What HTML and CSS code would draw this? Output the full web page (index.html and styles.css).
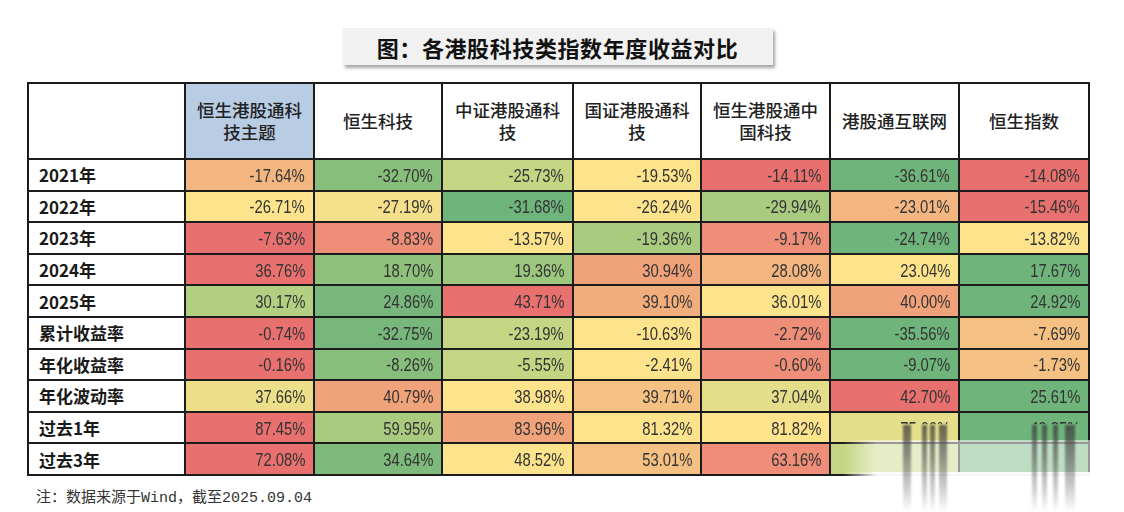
FILE: index.html
```html
<!DOCTYPE html>
<html lang="zh-CN">
<head>
<meta charset="utf-8">
<title>各港股科技类指数年度收益对比</title>
<link rel="stylesheet" href="styles.css">
</head>
<body>
<div class="page">
  <div class="title-row"><div class="title">图：各港股科技类指数年度收益对比</div></div>
  <table class="grid">
    <colgroup>
      <col class="c0"><col class="c1"><col class="c2"><col class="c3"><col class="c4"><col class="c5"><col class="c6"><col class="c7">
    </colgroup>
    <thead>
      <tr>
        <th class="corner"></th>
        <th class="hl">恒生港股通科<br>技主题</th>
        <th>恒生科技</th>
        <th>中证港股通科<br>技</th>
        <th>国证港股通科<br>技</th>
        <th>恒生港股通中<br>国科技</th>
        <th>港股通互联网</th>
        <th>恒生指数</th>
      </tr>
    </thead>
    <tbody>
      <tr><td class="lab">2021年</td><td class="o"><span>-17.64%</span></td><td class="g2"><span>-32.70%</span></td><td class="lg"><span>-25.73%</span></td><td class="y"><span>-19.53%</span></td><td class="r"><span>-14.11%</span></td><td class="g3"><span>-36.61%</span></td><td class="r"><span>-14.08%</span></td></tr>
      <tr><td class="lab">2022年</td><td class="y"><span>-26.71%</span></td><td class="y2"><span>-27.19%</span></td><td class="g3"><span>-31.68%</span></td><td class="y"><span>-26.24%</span></td><td class="g1"><span>-29.94%</span></td><td class="o"><span>-23.01%</span></td><td class="r"><span>-15.46%</span></td></tr>
      <tr><td class="lab">2023年</td><td class="r"><span>-7.63%</span></td><td class="s"><span>-8.83%</span></td><td class="y"><span>-13.57%</span></td><td class="g1"><span>-19.36%</span></td><td class="s"><span>-9.17%</span></td><td class="g3"><span>-24.74%</span></td><td class="y"><span>-13.82%</span></td></tr>
      <tr><td class="lab">2024年</td><td class="r"><span>36.76%</span></td><td class="g2b"><span>18.70%</span></td><td class="g1b"><span>19.36%</span></td><td class="s2"><span>30.94%</span></td><td class="o"><span>28.08%</span></td><td class="y"><span>23.04%</span></td><td class="g3"><span>17.67%</span></td></tr>
      <tr><td class="lab">2025年</td><td class="lg2"><span>30.17%</span></td><td class="g3b"><span>24.86%</span></td><td class="r"><span>43.71%</span></td><td class="o3"><span>39.10%</span></td><td class="y"><span>36.01%</span></td><td class="s2"><span>40.00%</span></td><td class="g3"><span>24.92%</span></td></tr>
      <tr><td class="lab">累计收益率</td><td class="r"><span>-0.74%</span></td><td class="g3b"><span>-32.75%</span></td><td class="lg"><span>-23.19%</span></td><td class="y"><span>-10.63%</span></td><td class="s"><span>-2.72%</span></td><td class="g3"><span>-35.56%</span></td><td class="o2"><span>-7.69%</span></td></tr>
      <tr><td class="lab">年化收益率</td><td class="r"><span>-0.16%</span></td><td class="g2"><span>-8.26%</span></td><td class="lg"><span>-5.55%</span></td><td class="y"><span>-2.41%</span></td><td class="s"><span>-0.60%</span></td><td class="g3"><span>-9.07%</span></td><td class="o2"><span>-1.73%</span></td></tr>
      <tr><td class="lab">年化波动率</td><td class="k"><span>37.66%</span></td><td class="s2"><span>40.79%</span></td><td class="y"><span>38.98%</span></td><td class="o2"><span>39.71%</span></td><td class="k2"><span>37.04%</span></td><td class="r"><span>42.70%</span></td><td class="g3"><span>25.61%</span></td></tr>
      <tr><td class="lab">过去1年</td><td class="r"><span>87.45%</span></td><td class="g1"><span>59.95%</span></td><td class="s2"><span>83.96%</span></td><td class="y"><span>81.32%</span></td><td class="y"><span>81.82%</span></td><td class="k2"><span class="cut">75.00%</span></td><td class="g3"><span class="cut">49.85%</span></td></tr>
      <tr><td class="lab">过去3年</td><td class="r"><span>72.08%</span></td><td class="g2c"><span>34.64%</span></td><td class="y"><span>48.52%</span></td><td class="o2"><span>53.01%</span></td><td class="s"><span>63.16%</span></td><td class="lg3"></td><td class="g3"></td></tr>
    </tbody>
  </table>
  <p class="note">注：数据来源于<span class="mono">Wind</span>，截至<span class="mono">2025.09.04</span></p>
</div>
<div class="wm">
  <div class="wm-band"></div>
  <div class="wm-low"></div>
  <div class="bar b1"></div><div class="bar b2"></div><div class="bar b3"></div><div class="bar b4"></div>
  <div class="bar b5"></div><div class="bar b6"></div><div class="bar b7"></div><div class="bar b8"></div>
</div>
</body>
</html>
```
FILE: styles.css
```css
html, body { margin: 0; padding: 0; background: #ffffff; }
body { width: 1124px; height: 512px; overflow: hidden; position: relative; font-family: "Noto Sans CJK SC", "Noto Sans", sans-serif; color: #222; }

.page { margin-left: 27px; width: 1061px; padding-top: 28px; }

.title-row { display: flex; justify-content: center; }
.title {
  width: 430px; height: 37px; box-sizing: border-box;
  display: flex; align-items: center; justify-content: center;
  background: #f1f1f1;
  box-shadow: 2px 3px 3px rgba(0,0,0,0.35);
  font-size: 22px; font-weight: 700; color: #111; letter-spacing: 0.6px;
}

.grid {
  margin-top: 17px;
  width: 1061px;
  border-collapse: collapse;
  table-layout: fixed;
}
.c0 { width: 157px; } .c1 { width: 129px; } .c2 { width: 128px; } .c3 { width: 131px; }
.c4 { width: 128px; } .c5 { width: 129px; } .c6 { width: 129px; } .c7 { width: 130px; }

.grid th, .grid td { border: 2px solid #1c1c1c; padding: 0; }
.grid thead tr { height: 76px; }
.grid th {
  font-size: 17.5px; font-weight: 500; line-height: 22px; color: #222;
  text-align: center; vertical-align: middle; background: #fff;
}
.grid th.hl { background: #b8cce4; }
.grid tbody tr { height: 31.6px; }
.grid td { text-align: right; padding-right: 8px; vertical-align: middle; }
.grid td span {
  display: inline-block;
  font-family: "Liberation Sans", Arial, sans-serif;
  font-size: 19px; line-height: 20px; color: #333;
  transform: scaleX(0.78); transform-origin: right center;
}
.grid td span.cut { clip-path: inset(0 0 72% 0); }
.grid td.lab {
  text-align: left; padding: 0 0 0 10px; background: #fff;
  font-size: 17px; font-weight: 700; color: #1a1a1a;
}

.r { background: #e8716f; }
.s { background: #ee8d78; }
.s2 { background: #f0a37a; }
.o { background: #f3b680; }
.o2 { background: #f5c183; }
.o3 { background: #f2ad7c; }
.y { background: #fce38c; }
.y2 { background: #f4e08a; }
.k { background: #ecdf8a; }
.k2 { background: #e4dd89; }
.lg { background: #c4d584; }
.lg2 { background: #b3d082; }
.lg3 { background: #c6d584; }
.g1 { background: #a8cb80; }
.g1b { background: #9dc67e; }
.g2 { background: #88be7b; }
.g2b { background: #90c17c; }
.g2c { background: #7eba7b; }
.g3 { background: #6fb47b; }
.g3b { background: #78b77b; }

.note {
  margin: 10px 0 0 9px;
  font-size: 15px; line-height: 20px; color: #333;
  font-family: "Noto Sans CJK SC", sans-serif;
}
.note .mono { font-family: "Liberation Mono", monospace; }

/* image watermark overlaying the bottom-right corner */
.wm { position: absolute; left: 843px; top: 420px; width: 281px; height: 92px; }
.wm-band {
  position: absolute; left: 0; top: 20px; width: 278px; height: 32px;
  background: linear-gradient(to right, rgba(255,255,255,0) 0, rgba(255,255,255,0.55) 12%, rgba(255,255,255,0.55) 96%, rgba(255,255,255,0) 100%);
}
.wm-low {
  position: absolute; left: 0; top: 52px; width: 278px; height: 40px;
  background: linear-gradient(to right, rgba(255,255,255,0) 0, rgba(255,255,255,0.96) 12%, rgba(255,255,255,0.96) 97%, rgba(255,255,255,0.6) 100%);
}
.bar {
  position: absolute; top: 5px; height: 87px;
  background: linear-gradient(to bottom, rgba(60,60,60,0.75) 0, rgba(80,80,80,0.6) 35%, rgba(110,110,110,0.3) 75%, rgba(120,120,120,0) 100%);
  filter: blur(0.8px);
}
.b1 { left: 60px; width: 8px; }
.b2 { left: 79px; width: 5px; }
.b3 { left: 87px; width: 5px; }
.b4 { left: 96px; width: 8px; }
.b5 { left: 189px; width: 5px; }
.b6 { left: 199px; width: 5px; }
.b7 { left: 210px; width: 5px; }
.b8 { left: 222px; width: 10px; }
```
